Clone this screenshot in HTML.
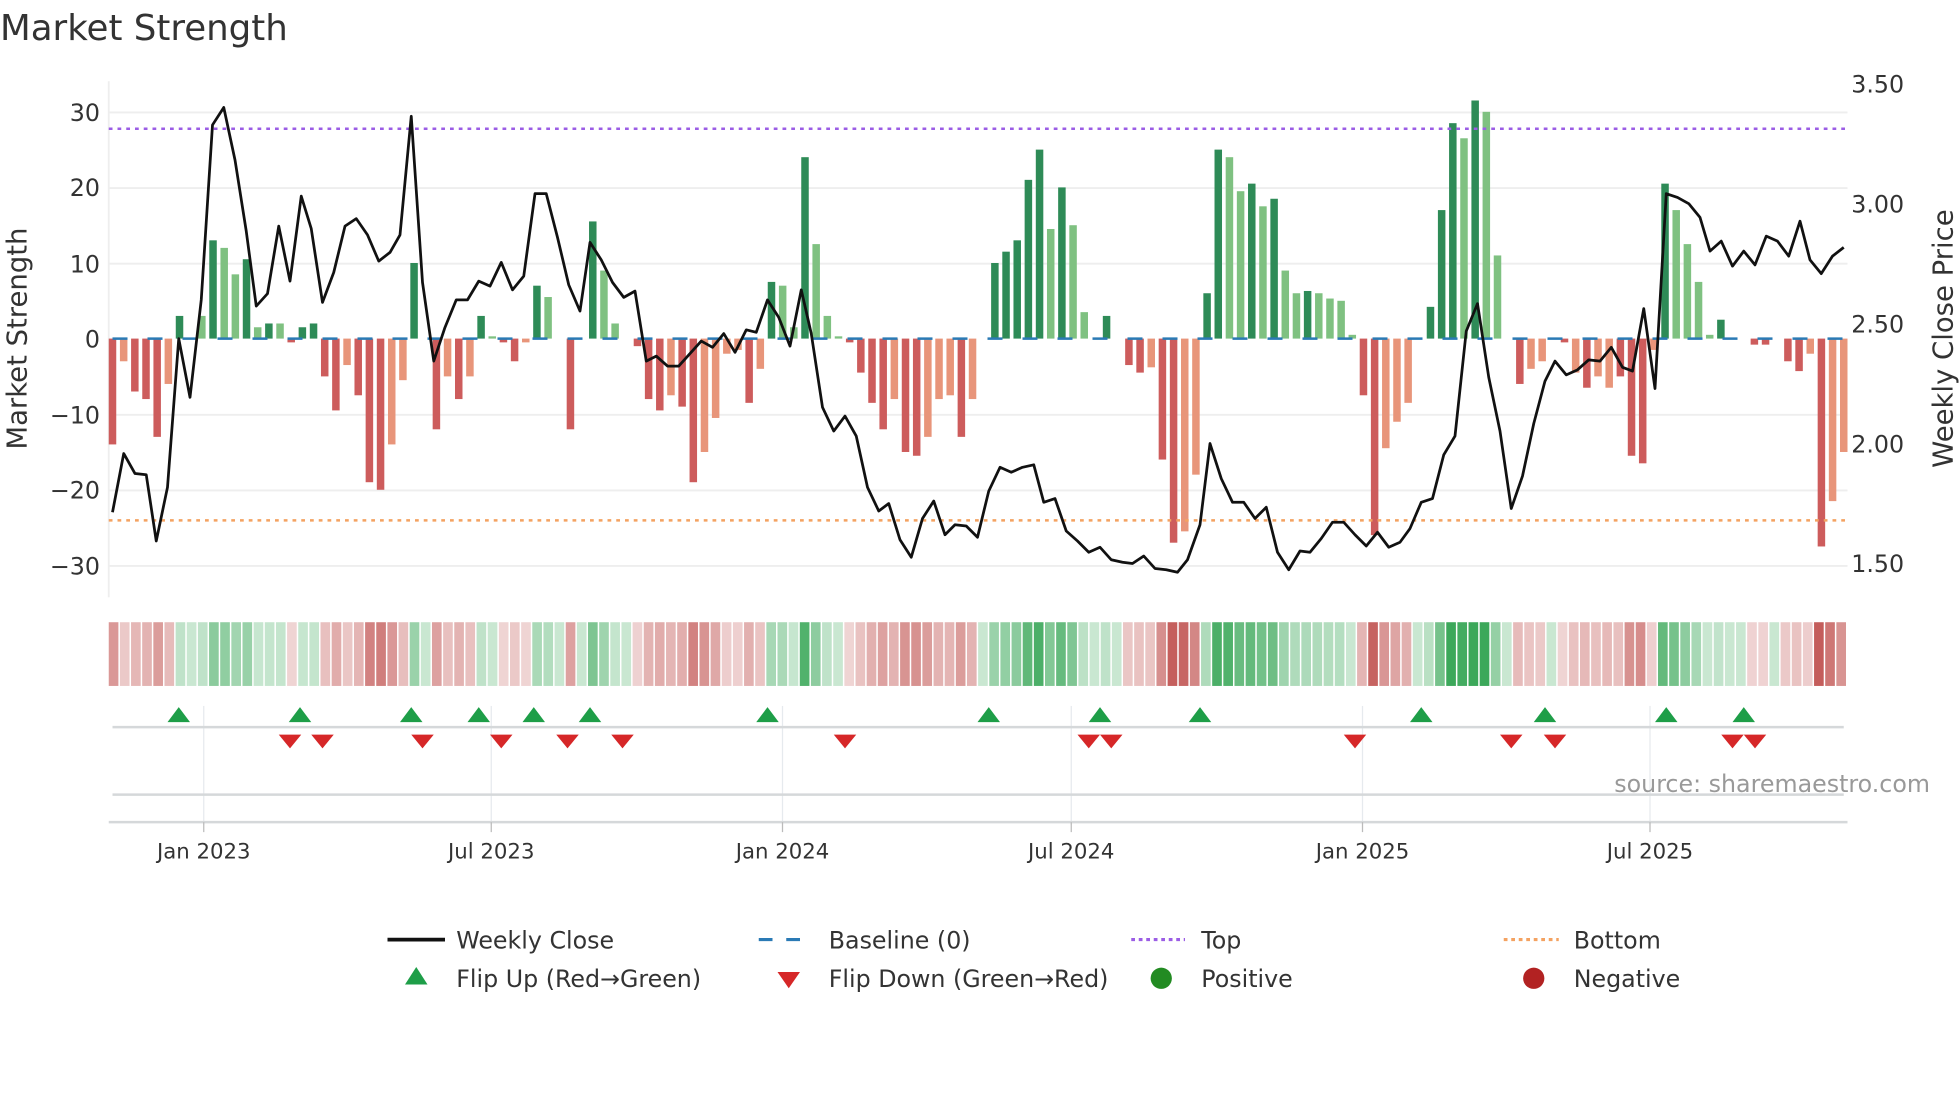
<!DOCTYPE html>
<html><head><meta charset="utf-8"><style>
html,body{margin:0;padding:0;background:#fff;width:1960px;height:1102px;overflow:hidden}
svg{display:block}
text{font-family:"DejaVu Sans","Liberation Sans",sans-serif;fill:#333}
</style></head><body>
<svg id="s" width="1960" height="1102" viewBox="0 0 1568 882" preserveAspectRatio="none" xmlns="http://www.w3.org/2000/svg">
<text x="0" y="32" font-size="28.5">Market Strength</text>
<g stroke="#eee" stroke-width="1.5">
<line x1="87" x2="1478" y1="90" y2="90"/><line x1="87" x2="1478" y1="150.5" y2="150.5"/><line x1="87" x2="1478" y1="211" y2="211"/><line x1="87" x2="1478" y1="332" y2="332"/><line x1="87" x2="1478" y1="392.5" y2="392.5"/><line x1="87" x2="1478" y1="453" y2="453"/>
<line x1="87" x2="87" y1="65" y2="478"/>
</g>
<g stroke="#e6eaee" stroke-width="1">
<line x1="163" x2="163" y1="565" y2="660"/><line x1="393" x2="393" y1="565" y2="660"/><line x1="626" x2="626" y1="565" y2="660"/><line x1="857" x2="857" y1="565" y2="660"/><line x1="1090" x2="1090" y1="565" y2="660"/><line x1="1320" x2="1320" y1="565" y2="660"/>
</g>
<g id="bars"></g>
<line x1="87" x2="1478" y1="103" y2="103" stroke="#9b5de5" stroke-width="2" stroke-dasharray="3,4"/>
<line x1="87" x2="1478" y1="416.5" y2="416.5" stroke="#f4a261" stroke-width="2" stroke-dasharray="3,4"/>
<line x1="90" x2="1478" y1="271" y2="271" stroke="#2a7ab5" stroke-width="2" stroke-dasharray="12,16"/>
<polyline id="price" fill="none" stroke="#111" stroke-width="2.2" stroke-linejoin="round"/>
<g font-size="19" text-anchor="end">
<text x="80" y="97">30</text><text x="80" y="157">20</text><text x="80" y="218">10</text><text x="80" y="278">0</text><text x="80" y="339">−10</text><text x="80" y="399">−20</text><text x="80" y="460">−30</text>
</g>
<g font-size="19">
<text x="1481" y="74">3.50</text><text x="1481" y="170">3.00</text><text x="1481" y="266">2.50</text><text x="1481" y="362">2.00</text><text x="1481" y="458">1.50</text>
</g>
<text transform="translate(21,271) rotate(-90)" font-size="22" text-anchor="middle">Market Strength</text>
<text transform="translate(1562,271) rotate(-90)" font-size="22" text-anchor="middle">Weekly Close Price</text>
<g id="heat"></g>
<line x1="90" x2="1475" y1="582" y2="582" stroke="#d5d8da" stroke-width="2"/>
<line x1="90" x2="1475" y1="636" y2="636" stroke="#d5d8da" stroke-width="2"/>
<line x1="87" x2="1478" y1="658" y2="658" stroke="#d5d8da" stroke-width="2"/>
<g stroke="#bbb" stroke-width="1"><line x1="163" x2="163" y1="658" y2="666"/><line x1="393" x2="393" y1="658" y2="666"/><line x1="626" x2="626" y1="658" y2="666"/><line x1="857" x2="857" y1="658" y2="666"/><line x1="1090" x2="1090" y1="658" y2="666"/><line x1="1320" x2="1320" y1="658" y2="666"/></g>
<g id="marks"></g>
<text x="1544" y="634" font-size="19" text-anchor="end" style="fill:#999">source: sharemaestro.com</text>
<g font-size="17" text-anchor="middle">
<text x="163" y="687">Jan 2023</text><text x="393" y="687">Jul 2023</text><text x="626" y="687">Jan 2024</text><text x="857" y="687">Jul 2024</text><text x="1090" y="687">Jan 2025</text><text x="1320" y="687">Jul 2025</text>
</g>
<g font-size="19">
<line x1="310" x2="356" y1="752" y2="752" stroke="#111" stroke-width="3"/><text x="365" y="759">Weekly Close</text>
<line x1="607" x2="651" y1="752" y2="752" stroke="#2a7ab5" stroke-width="2.5" stroke-dasharray="11,11"/><text x="663" y="759">Baseline (0)</text>
<line x1="905" x2="948" y1="752" y2="752" stroke="#9b5de5" stroke-width="2.5" stroke-dasharray="3,3"/><text x="961" y="759">Top</text>
<line x1="1203" x2="1247" y1="752" y2="752" stroke="#f4a261" stroke-width="2.5" stroke-dasharray="3,3"/><text x="1259" y="759">Bottom</text>
<polygon points="324,788 342,788 333,774" fill="#1e9e48"/><text x="365" y="790">Flip Up (Red→Green)</text>
<polygon points="622,778 640,778 631,791" fill="#d62728"/><text x="663" y="790">Flip Down (Green→Red)</text>
<circle cx="929" cy="783" r="8.5" fill="#228b22"/><text x="961" y="790">Positive</text>
<circle cx="1227" cy="783" r="8.5" fill="#b22222"/><text x="1259" y="790">Negative</text>
</g>
</svg>
<script>
var NS="http://www.w3.org/2000/svg";
function el(p,t,a){var e=document.createElementNS(NS,t);for(var k in a)e.setAttribute(k,a[k]);p.appendChild(e);return e;}
var B=[[-14,1],[-3,0],[-7,1],[-8,1],[-13,1],[-6,0],[3,1],[0,0],[3,0],[13,1],[12,0],[8.5,0],[10.5,1],[1.5,0],[2,1],[2,0],[-0.5,1],[1.5,1],[2,1],[-5,1],[-9.5,1],[-3.5,0],[-7.5,1],[-19,1],[-20,1],[-14,0],[-5.5,0],[10,1],[0,0],[-12,1],[-5,0],[-8,1],[-5,0],[3,1],[0.3,0],[-0.5,1],[-3,1],[-0.5,0],[7,1],[5.5,0],[0,0],[-12,1],[0,0],[15.5,1],[9,0],[2,0],[0,0],[-1,1],[-8,1],[-9.5,1],[-7.5,0],[-9,1],[-19,1],[-15,0],[-10.5,0],[-2,0],[-1.5,0],[-8.5,1],[-4,0],[7.5,1],[7,0],[1.5,0],[24,1],[12.5,0],[3,0],[0.3,0],[-0.5,1],[-4.5,1],[-8.5,1],[-12,1],[-8,0],[-15,1],[-15.5,1],[-13,0],[-8,0],[-7.5,0],[-13,1],[-8,0],[0,0],[10,1],[11.5,1],[13,1],[21,1],[25,1],[14.5,0],[20,1],[15,0],[3.5,0],[0,0],[3,1],[0,0],[-3.5,1],[-4.5,1],[-3.8,0],[-16,1],[-27,1],[-25.5,0],[-18,0],[6,1],[25,1],[24,0],[19.5,0],[20.5,1],[17.5,0],[18.5,1],[9,0],[6,0],[6.3,1],[6,0],[5.3,0],[5,0],[0.5,0],[-7.5,1],[-26,1],[-14.5,0],[-11,0],[-8.5,0],[0,0],[4.2,1],[17,1],[28.5,1],[26.5,0],[31.5,1],[30,0],[11,0],[0,0],[-6,1],[-4,0],[-3,0],[0,0],[-0.5,1],[-4.5,0],[-6.5,1],[-5,0],[-6.5,0],[-5,1],[-15.5,1],[-16.5,1],[-1.5,0],[20.5,1],[17,0],[12.5,0],[7.5,0],[0.5,0],[2.5,1],[0,0],[0,0],[-0.8,1],[-0.8,1],[0,0],[-3,1],[-4.3,1],[-2,0],[-27.5,1],[-21.5,0],[-15,0]];
var n=B.length, x0=90, step=(1475-90)/(n-1);
var g=document.getElementById('bars'), h=document.getElementById('heat');
var hw=(1478-87)/n;
for(var i=0;i<n;i++){
 var v=B[i][0],d=B[i][1],x=x0+i*step;
 if(Math.abs(v)>0.05){
  var y0=271, y1=271-v*6.05;
  var c=v>0?(d?'#2e8b57':'#7fc181'):(d?'#cd5c5c':'#e8957a');
  el(g,'rect',{x:x-3,y:Math.min(y0,y1),width:6,height:Math.abs(y1-y0),fill:c});
 }
 var a=Math.min(1,0.25+Math.abs(v)/30*0.8);
 var hc=v>=0?'rgba(60,168,90,'+a+')':'rgba(195,90,88,'+a+')';
 if(v>=0 && v<0.6) hc='rgba(60,168,90,0.28)';
 el(h,'rect',{x:87+i*hw,y:498,width:hw-1.2,height:51,fill:hc});
}
var P=[[90,410],[99,363],[108,379],[117,380],[125,433],[134,390],[143,271],[152,318],[161,240],[170,100],[179,86],[188,128],[197,185],[205,245],[214,235],[223,181],[232,225],[241,157],[249,183],[258,242],[267,218],[276,181],[285,175],[294,188],[303,209],[312,202],[320,188],[329,93],[338,226],[347,289],[356,262],[365,240],[374,240],[383,225],[392,229],[401,210],[410,232],[419,221],[428,155],[437,155],[446,190],[455,228],[464,249],[472,194],[481,208],[490,226],[499,238],[508,233],[517,289],[525,285],[534,293],[543,293],[552,283],[561,273],[570,278],[579,267],[588,282],[597,264],[605,266],[614,240],[623,254],[632,277],[641,232],[649,267],[658,326],[667,345],[676,333],[685,349],[694,390],[703,409],[711,403],[720,432],[729,446],[738,415],[747,401],[756,428],[764,420],[773,421],[782,430],[791,393],[800,374],[809,378],[818,374],[827,372],[835,402],[844,399],[853,425],[862,433],[871,442],[880,438],[889,448],[898,450],[906,451],[915,445],[924,455],[933,456],[942,458],[950,448],[960,420],[968,355],[977,383],[986,402],[995,402],[1004,415],[1013,406],[1022,442],[1031,456],[1040,441],[1048,442],[1057,431],[1066,418],[1075,418],[1084,428],[1093,437],[1102,426],[1111,438],[1120,434],[1128,423],[1137,402],[1146,399],[1155,364],[1164,349],[1173,265],[1182,243],[1191,302],[1200,345],[1209,407],[1218,381],[1227,339],[1236,305],[1244,289],[1253,300],[1262,296],[1271,288],[1280,289],[1289,278],[1298,294],[1306,297],[1315,247],[1324,311],[1333,155],[1342,158],[1351,163],[1360,174],[1368,201],[1377,193],[1386,213],[1395,201],[1404,212],[1413,189],[1422,193],[1431,205],[1440,177],[1448,208],[1457,219],[1466,205],[1475,198]];
document.getElementById('price').setAttribute('points',P.map(function(p){return p.join(',')}).join(' '));
var m=document.getElementById('marks');
[143,240,329,383,427,472,614,791,880,960,1137,1236,1333,1395].forEach(function(x){el(m,'polygon',{points:(x-9)+',578 '+(x+9)+',578 '+x+',566',fill:'#1e9e48'});});
[232,258,338,401,454,498,676,871,889,1084,1209,1244,1386,1404].forEach(function(x){el(m,'polygon',{points:(x-9)+',588 '+(x+9)+',588 '+x+',599',fill:'#d62728'});});
</script>
</body></html>
